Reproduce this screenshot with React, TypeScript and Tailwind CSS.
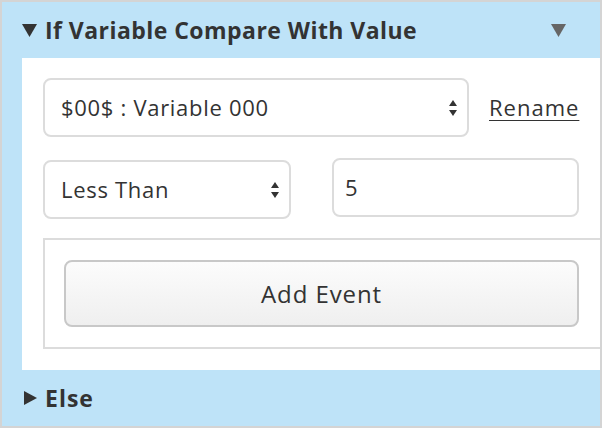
const font = { fontFamily: '"Open Sans", "Liberation Sans", sans-serif' };

function SelectArrows() {
  return (
    <svg width="8" height="16" viewBox="0 0 8 16" className="shrink-0">
      <path d="M4 0 L8 6 L0 6 Z" fill="#333" />
      <path d="M0 10 L8 10 L4 16 Z" fill="#333" />
    </svg>
  );
}

function Caret({ open, color = "#333" }: { open: boolean; color?: string }) {
  return (
    <svg width="15" height="14" viewBox="0 0 15 14" className="shrink-0">
      {open ? <path d="M0 1 L15 1 L7.5 14 Z" fill={color} /> : <path d="M1 0 L14 7 L1 14 Z" fill={color} />}
    </svg>
  );
}

function FakeSelect({ label, className }: { label: string; className: string }) {
  return (
    <div
      className={`flex items-center justify-between rounded-[8px] border-2 border-[#dcdcdc] bg-white pl-[16px] pr-[10px] text-[22px] tracking-[0.7px] text-[#333] ${className}`}
    >
      <span>{label}</span>
      <SelectArrows />
    </div>
  );
}

export default function App() {
  return (
    <div
      style={font}
      className="flex h-[428px] w-[602px] flex-col overflow-hidden border-2 border-[#d4d4d4] bg-[#bee3f8] text-[#333]"
    >
      <div className="flex h-[56px] shrink-0 items-center pl-[20px] pr-[34px]">
        <Caret open />
        <span className="ml-[8px] text-[23px] font-bold tracking-[0.45px]">If Variable Compare With Value</span>
        <span className="ml-auto">
          <Caret open color="#666" />
        </span>
      </div>

      <div className="ml-[20px] flex flex-col bg-white pb-[21px] pl-[21px] pt-[20px]">
        <div className="flex items-center">
          <FakeSelect label="$00$ : Variable 000" className="h-[59px] w-[426px]" />
          <span className="ml-[20px] text-[22px] tracking-[1px] underline decoration-1 underline-offset-[4px]">
            Rename
          </span>
        </div>

        <div className="mt-[21px] flex items-start">
          <FakeSelect label="Less Than" className="mt-[2px] h-[59px] w-[248px]" />
          <div className="ml-[41px] flex h-[59px] w-[247px] items-center rounded-[8px] border-2 border-[#dcdcdc] pl-[11px] text-[22px]">
            5
          </div>
        </div>

        <div className="mt-[19px] border-y-2 border-l-2 border-[#dcdcdc] py-[20px] pl-[19px] pr-[21px]">
          <button className="flex h-[67px] w-full items-center justify-center rounded-[8px] border-2 border-[#c8c8c8] bg-gradient-to-b from-[#fcfcfc] to-[#efefef] text-[24px] tracking-[0.9px] text-[#333]">
            Add Event
          </button>
        </div>
      </div>

      <div className="flex flex-1 items-center pl-[21px]">
        <Caret open={false} />
        <span className="ml-[7px] text-[23px] font-bold tracking-[1px]">Else</span>
      </div>
    </div>
  );
}
